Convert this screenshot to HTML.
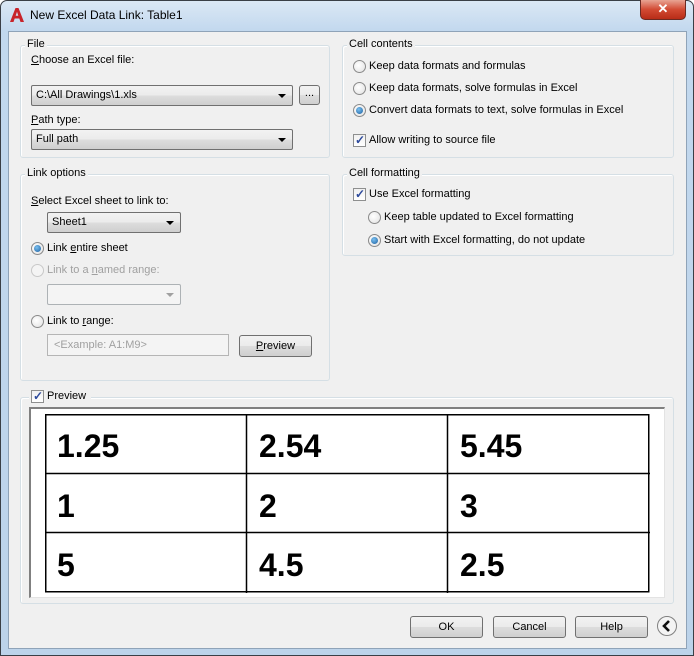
<!DOCTYPE html>
<html><head><meta charset="utf-8">
<style>
*{box-sizing:border-box;margin:0;padding:0}
body{width:694px;height:656px;overflow:hidden;background:#fff;font-family:"Liberation Sans",Tahoma,sans-serif;font-size:11px;color:#000;position:relative}
.win{position:absolute;left:0;top:0;width:694px;height:656px;border:1px solid #3a3f46;border-radius:7px 7px 0 0;background:linear-gradient(#dbe8f5,#c2d8ee 30px,#bcd3ea);}
.client{position:absolute;left:8px;top:31px;width:679px;height:618px;background:#f0f0f0;border:1px solid #8fa3b8}
.a{position:absolute;white-space:nowrap}
.grp{position:absolute;border:1px solid #d5dfe5;border-radius:3px;box-shadow:inset 1px 1px 0 #fff}
.lbl{position:absolute;background:#f0f0f0;padding:0 2px;top:-8px;left:6px;font-size:11px}
.combo{position:absolute;height:21px;border:1px solid #707070;border-radius:2px;background:linear-gradient(#f2f2f2,#ebebeb 50%,#dddddd 51%,#cfcfcf);padding:3px 4px;font-size:11px}
.combo:after{content:"";position:absolute;right:6px;top:8px;border-left:4px solid transparent;border-right:4px solid transparent;border-top:4px solid #000}
.combo.dis{border-color:#adb2b5;background:#f4f4f4}
.combo.dis:after{border-top-color:#a0a0a0}
.btn{position:absolute;height:22px;border:1px solid #707070;border-radius:3px;background:linear-gradient(#f2f2f2,#ebebeb 50%,#dddddd 51%,#cfcfcf);text-align:center;line-height:20px;font-size:11px}
.rad{position:absolute;width:13px;height:13px;border-radius:50%;border:1px solid #8a8a8a;background:radial-gradient(circle at 40% 40%,#fff,#e0e0e0)}
.rad.on:after{content:"";position:absolute;left:2px;top:2px;width:7px;height:7px;border-radius:50%;background:radial-gradient(circle at 40% 35%,#7ac0f0,#1c5fa0)}
.rad.dis{border-color:#c8c8c8;background:#f4f4f4}
.chk{position:absolute;width:13px;height:13px;border:1px solid #8e8f8f;background:linear-gradient(#f0f0f0,#fff)}
.chk:after{content:"\2713";position:absolute;left:1px;top:-2px;font-size:12px;color:#2d4a9c;font-weight:bold}
.gray{color:#a0a0a0}
u{text-decoration:underline}
.cell{position:absolute;font-family:"Liberation Sans",Arial,sans-serif;font-weight:bold;font-size:32px}
</style></head><body>
<div class="win"></div>
<!-- title -->
<svg class="a" style="left:9px;top:7px" width="16" height="16" viewBox="0 0 16 16"><path d="M1 15 L6.5 1 H9.5 L15 15 H11.5 L10.3 11.5 H5.7 L4.5 15 Z M6.7 8.7 H9.3 L8 4.8 Z" fill="#c8232a"/></svg>
<div class="a" style="left:30px;top:8px;font-size:12px">New Excel Data Link: Table1</div>
<div class="a" style="left:640px;top:0;width:46px;height:20px;border:1px solid #6b2a22;border-top:none;border-radius:0 0 5px 5px;background:linear-gradient(#e8a493,#d24a33 50%,#b82c17);color:#fff;text-align:center;font-weight:bold;font-size:13px;line-height:18px">✕</div>
<div class="client"></div>

<!-- File -->
<div class="grp" style="left:20px;top:45px;width:310px;height:113px"><div class="lbl" style="left:4px">File</div></div>
<div class="a" style="left:31px;top:54px"><u>C</u>hoose an Excel file:</div>
<div class="combo" style="left:31px;top:85px;width:262px">C:\All Drawings\1.xls</div>
<div class="btn" style="left:299px;top:85px;width:21px;height:20px;line-height:14px">...</div>
<div class="a" style="left:31px;top:114px"><u>P</u>ath type:</div>
<div class="combo" style="left:31px;top:129px;width:262px">Full path</div>

<!-- Link options -->
<div class="grp" style="left:20px;top:174px;width:310px;height:207px"><div class="lbl" style="left:4px">Link options</div></div>
<div class="a" style="left:31px;top:195px"><u>S</u>elect Excel sheet to link to:</div>
<div class="combo" style="left:47px;top:212px;width:134px">Sheet1</div>
<div class="rad on" style="left:31px;top:242px"></div><div class="a" style="left:47px;top:242px">Link <u>e</u>ntire sheet</div>
<div class="rad dis" style="left:31px;top:264px"></div><div class="a gray" style="left:47px;top:264px">Link to a <u>n</u>amed range:</div>
<div class="combo dis" style="left:47px;top:284px;width:134px"></div>
<div class="rad" style="left:31px;top:315px"></div><div class="a" style="left:47px;top:315px">Link to <u>r</u>ange:</div>
<div class="a gray" style="left:47px;top:334px;width:182px;height:22px;border:1px solid #b5b5b5;background:#f4f4f4;padding:4px 6px">&lt;Example: A1:M9&gt;</div>
<div class="btn" style="left:239px;top:335px;width:73px"><u>P</u>review</div>

<!-- Cell contents -->
<div class="grp" style="left:342px;top:45px;width:332px;height:113px"><div class="lbl" style="left:4px">Cell contents</div></div>
<div class="rad" style="left:353px;top:60px"></div><div class="a" style="left:369px;top:60px">Keep data formats and formulas</div>
<div class="rad" style="left:353px;top:82px"></div><div class="a" style="left:369px;top:82px">Keep data formats, solve formulas in Excel</div>
<div class="rad on" style="left:353px;top:104px"></div><div class="a" style="left:369px;top:104px">Convert data formats to text, solve formulas in Excel</div>
<div class="chk" style="left:353px;top:134px"></div><div class="a" style="left:369px;top:134px">Allow writing to source file</div>

<!-- Cell formatting -->
<div class="grp" style="left:342px;top:174px;width:332px;height:82px"><div class="lbl" style="left:4px">Cell formatting</div></div>
<div class="chk" style="left:353px;top:188px"></div><div class="a" style="left:369px;top:188px">Use Excel formatting</div>
<div class="rad" style="left:368px;top:211px"></div><div class="a" style="left:384px;top:211px">Keep table updated to Excel formatting</div>
<div class="rad on" style="left:368px;top:234px"></div><div class="a" style="left:384px;top:234px">Start with Excel formatting, do not update</div>

<!-- Preview -->
<div class="grp" style="left:20px;top:397px;width:654px;height:207px"></div>
<div class="a" style="left:29px;top:389px;background:#f0f0f0;width:62px;height:14px"></div>
<div class="chk" style="left:31px;top:390px"></div><div class="a" style="left:47px;top:390px">Preview</div>
<div class="a" style="left:29px;top:407px;width:636px;height:191px;background:#fff;border-top:2px solid #808080;border-left:2px solid #808080;border-right:1px solid #e3e3e3;border-bottom:1px solid #e3e3e3"></div>
<svg class="a" style="left:45px;top:414px" width="605" height="179"><g stroke="#000" stroke-width="1.5" fill="none"><rect x="0.75" y="0.75" width="603" height="177"/><line x1="201.5" y1="0" x2="201.5" y2="179"/><line x1="402.5" y1="0" x2="402.5" y2="179"/><line x1="0" y1="59.5" x2="605" y2="59.5"/><line x1="0" y1="118.5" x2="605" y2="118.5"/></g></svg>
<div class="cell" style="left:57px;top:428px">1.25</div>
<div class="cell" style="left:259px;top:428px">2.54</div>
<div class="cell" style="left:460px;top:428px">5.45</div>
<div class="cell" style="left:57px;top:488px">1</div>
<div class="cell" style="left:259px;top:488px">2</div>
<div class="cell" style="left:460px;top:488px">3</div>
<div class="cell" style="left:57px;top:547px">5</div>
<div class="cell" style="left:259px;top:547px">4.5</div>
<div class="cell" style="left:460px;top:547px">2.5</div>

<!-- buttons -->
<div class="btn" style="left:410px;top:616px;width:73px">OK</div>
<div class="btn" style="left:493px;top:616px;width:73px">Cancel</div>
<div class="btn" style="left:575px;top:616px;width:73px">Help</div>
<svg class="a" style="left:656px;top:615px" width="22" height="22" viewBox="0 0 22 22"><circle cx="11" cy="11" r="9.5" fill="#f4f4f4" stroke="#808080"/><path d="M13 6 L8 11 L13 16" stroke="#111" stroke-width="2.6" fill="none"/></svg>
</body></html>
